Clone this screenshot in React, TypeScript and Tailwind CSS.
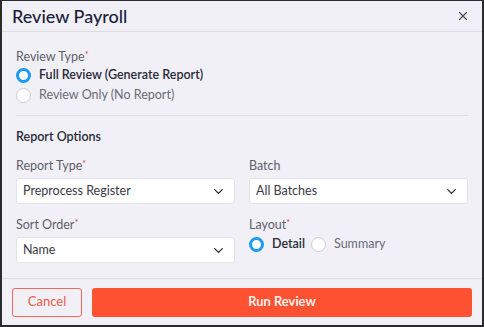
import { ChevronDown, X } from 'lucide-react';

function Radio({ checked, label }: { checked?: boolean; label: string }) {
  return (
    <label className="flex items-center gap-2 h-5">
      <span
        className={
          checked
            ? 'w-[15px] h-[15px] rounded-full border-[3px] border-[#1e9cf0] bg-white'
            : 'w-[15px] h-[15px] rounded-full border-[1.5px] border-[#cdcdd8] bg-white'
        }
      />
      <span
        className={
          checked
            ? 'text-[12.5px] leading-5 font-semibold text-[#2a2a3a]'
            : 'text-[12.5px] leading-5 text-[#6b6b78]'
        }
      >
        {label}
      </span>
    </label>
  );
}

function Label({ text, required }: { text: string; required?: boolean }) {
  return (
    <div className="h-4 text-[12.5px] leading-4 text-[#5f5f6b]">
      {text}
      {required && <span className="text-[#e8384f] text-[9px] align-top leading-3">*</span>}
    </div>
  );
}

function Select({ value }: { value: string }) {
  return (
    <div className="h-[26px] flex items-center justify-between bg-white border border-[#e3e3ea] rounded-[3px] pl-[6px] pr-[8px] text-[12.5px] text-[#3a3a46]">
      <span>{value}</span>
      <ChevronDown size={15} strokeWidth={2} className="text-[#2a2a3a]" />
    </div>
  );
}

export default function App() {
  return (
    <div
      className="w-[484px] h-[327px] flex flex-col bg-[#f0f0f6] border-x-2 border-b-2 border-t border-[#2b2b2b]"
      style={{ fontFamily: 'Lato, "Noto Sans", sans-serif' }}
    >
      <div className="h-[31px] shrink-0 flex items-center justify-between pl-[10px] pr-[12px] border-b border-[#dcdce6]">
        <h1 className="text-[18px] font-medium text-[#1d1d3a]">Review Payroll</h1>
        <X size={14} strokeWidth={2} className="text-[#4a4a66]" />
      </div>

      <div className="flex-1 px-[14px] pt-[17px]">
        <Label text="Review Type" required />
        <div className="flex flex-col">
          <Radio checked label="Full Review (Generate Report)" />
          <Radio label="Review Only (No Report)" />
        </div>
        <div className="border-t border-[#dedee8] mt-[10px]" />

        <div className="mt-[13px] h-4 text-[12.5px] leading-4 font-semibold text-[#2a2a3a]">
          Report Options
        </div>

        <div className="grid grid-cols-2 gap-x-[14px] mt-[13px]">
          <div className="flex flex-col gap-1">
            <Label text="Report Type" required />
            <Select value="Preprocess Register" />
          </div>
          <div className="flex flex-col gap-1">
            <Label text="Batch" />
            <Select value="All Batches" />
          </div>
        </div>

        <div className="grid grid-cols-2 gap-x-[14px] mt-[13px]">
          <div className="flex flex-col gap-1">
            <Label text="Sort Order" required />
            <Select value="Name" />
          </div>
          <div className="flex flex-col">
            <Label text="Layout" required />
            <div className="flex items-center gap-[6px] mt-px">
              <Radio checked label="Detail" />
              <Radio label="Summary" />
            </div>
          </div>
        </div>
      </div>

      <div className="h-[47px] shrink-0 flex items-center gap-[10px] px-[10px] border-t border-[#dcdce6]">
        <button className="w-[70px] h-[29px] rounded-[3px] border border-[#f26a55] text-[#f05a44] text-[13px] bg-transparent">
          Cancel
        </button>
        <button className="flex-1 h-[29px] rounded-[3px] bg-[#ff5233] text-white text-[13px] font-semibold">
          Run Review
        </button>
      </div>
    </div>
  );
}
